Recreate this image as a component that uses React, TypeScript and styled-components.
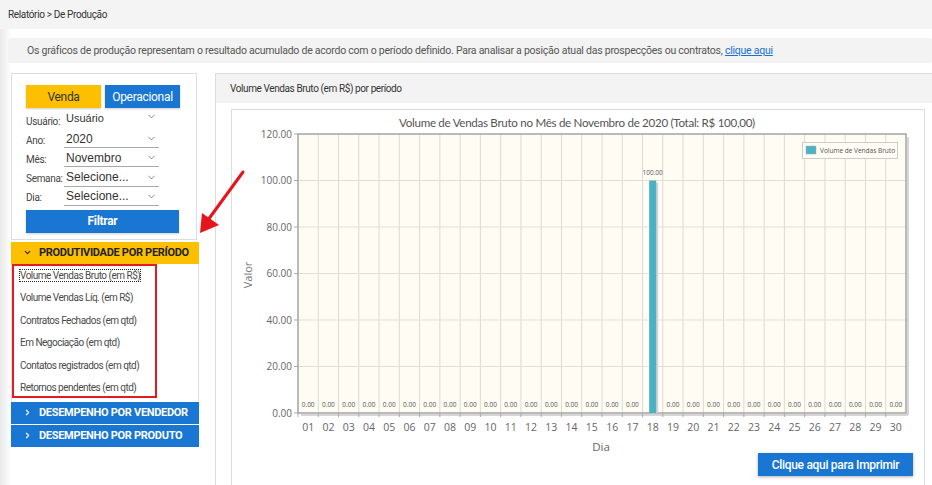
import React from 'react';
import styled, { createGlobalStyle } from 'styled-components';
import { ChevronDown, ChevronRight } from 'lucide-react';

const GlobalStyle = createGlobalStyle`
  html, body {
    margin: 0;
    padding: 0;
  }
  body {
    font-family: Roboto, 'Liberation Sans', Arial, sans-serif;
    color: #333;
    background: linear-gradient(to right, #e9e9e9 0, #ffffff 11px);
    overflow: hidden;
  }
  * {
    box-sizing: border-box;
  }
`;

const Page = styled.div`
  position: relative;
  width: 932px;
  height: 485px;
`;

const TopBar = styled.div`
  height: 29px;
  padding-left: 8px;
  background: #f4f4f4;
  font-size: 10px;
  letter-spacing: -0.35px;
  line-height: 29px;
  color: #333;
`;

const InfoBar = styled.div`
  margin: 9px 0 0 8px;
  height: 25px;
  padding-left: 19px;
  background: #f3f3f3;
  border-radius: 3px;
  font-size: 10.5px;
  letter-spacing: -0.24px;
  line-height: 25px;
  color: #555;

  a {
    color: #1a6fd0;
    text-decoration: underline;
  }
`;

const Main = styled.div`
  display: flex;
  align-items: flex-start;
  margin-top: 10px;
  padding-left: 11px;
`;

const Sidebar = styled.aside`
  width: 188px;
  flex-shrink: 0;
`;

const FilterBox = styled.div`
  width: 186px;
  border: 1px solid #ddd;
  padding: 11px 0 6px 14px;
`;

const ButtonRow = styled.div`
  display: flex;
  gap: 4px;
`;

const TabButton = styled.button<{ $tone: 'yellow' | 'blue' }>`
  width: 75px;
  height: 23px;
  border: none;
  padding: 0;
  font-family: Roboto, sans-serif;
  font-size: 12px;
  letter-spacing: -0.3px;
  background: ${p => (p.$tone === 'yellow' ? '#fdc000' : '#1976d2')};
  color: ${p => (p.$tone === 'yellow' ? '#333' : '#fff')};
  box-shadow: 0 1px 2px rgba(0, 0, 0, 0.2);
`;

const Form = styled.div`
  display: flex;
  flex-direction: column;
  margin-top: 2px;
`;

const FormRow = styled.div`
  display: flex;
  align-items: center;
  height: 19.2px;
`;

const FieldLabel = styled.span`
  width: 38px;
  font-size: 10px;
  letter-spacing: -0.3px;
  color: #444;
  margin-top: 3px;
`;

const FakeSelect = styled.div<{ $plain?: boolean }>`
  position: relative;
  width: 95px;
  height: 19px;
  display: flex;
  align-items: center;
  padding-left: 2px;
  border-bottom: ${p => (p.$plain ? 'none' : '1px solid #aaa')};
  font-family: 'Liberation Sans', Arial, sans-serif;
  font-size: ${p => (p.$plain ? '11px' : '12px')};
  color: #333;

  span {
    margin-top: ${p => (p.$plain ? '-4px' : '1px')};
  }

  svg {
    position: absolute;
    right: 2px;
    top: ${p => (p.$plain ? '1px' : '4px')};
  }
`;

const FilterButton = styled.button`
  margin-top: 4px;
  width: 153px;
  height: 23px;
  border: none;
  background: #1976d2;
  color: #fff;
  font-family: Roboto, sans-serif;
  font-weight: 700;
  font-size: 12px;
  letter-spacing: -0.3px;
  box-shadow: 0 1px 2px rgba(0, 0, 0, 0.2);
`;

const Accordion = styled.div`
  margin-top: 2px;
`;

const SectionHeader = styled.div<{ $active?: boolean }>`
  display: flex;
  align-items: center;
  height: 22px;
  margin-top: ${p => (p.$active ? '0' : '1px')};
  padding-left: 12px;
  background: ${p => (p.$active ? '#fdc000' : '#1976d2')};
  color: ${p => (p.$active ? '#222' : '#fff')};
  font-weight: 700;
  font-size: 11px;
  letter-spacing: -0.3px;

  svg {
    margin-right: 7px;
  }
`;

const SectionBody = styled.div`
  border-left: 1px solid #ddd;
  border-right: 1px solid #ddd;
  padding-bottom: 3px;
`;

const HighlightBox = styled.ul`
  list-style: none;
  margin: 0;
  width: 145px;
  padding: 2px 0 0 6px;
  border: 2px solid #e31b23;
  display: flex;
  flex-direction: column;
  gap: 6.4px;
`;

const MenuItem = styled.li<{ $focused?: boolean }>`
  height: 16px;
  line-height: 16px;
  font-size: 10px;
  letter-spacing: -0.5px;
  color: #4a4a4a;
  white-space: nowrap;

  span {
    outline: ${p => (p.$focused ? '1px dotted #222' : 'none')};
  }
`;

const ChartPanel = styled.section`
  flex: 1;
  margin-left: 16px;
  border: 1px solid #ddd;
  border-right: none;
  height: 413px;
`;

const PanelHeader = styled.div`
  height: 29px;
  padding-left: 14px;
  background: #f3f3f3;
  font-size: 10px;
  letter-spacing: -0.4px;
  line-height: 29px;
  color: #333;
`;

const ChartBox = styled.div`
  margin: 6px 7px 0 15px;
  border: 1px solid #ddd;
  height: 380px;
  display: flex;
  flex-direction: column;
`;

const PrintRow = styled.div`
  display: flex;
  justify-content: flex-end;
  padding-right: 11px;
`;

const PrintButton = styled.button`
  width: 155px;
  height: 23px;
  border: none;
  background: #1976d2;
  color: #fff;
  font-family: Roboto, sans-serif;
  font-size: 12px;
  font-weight: 500;
  letter-spacing: -0.3px;
  box-shadow: 0 1px 3px rgba(0, 0, 0, 0.3);
`;

const ArrowOverlay = styled.svg`
  position: absolute;
  left: 190px;
  top: 160px;
  overflow: visible;
`;

const CHART_FONT = "'Open Sans', 'DejaVu Sans', sans-serif";
const TITLE_FONT = "Lato, 'Open Sans', sans-serif";

const days = Array.from({ length: 30 }, (_, i) => ({
  day: String(i + 1).padStart(2, '0'),
  value: i === 17 ? 100 : 0,
}));

const SalesChart: React.FC = () => {
  const x0 = 66;
  const x1 = 674;
  const y0 = 24;
  const y1 = 303;
  const cw = (x1 - x0) / days.length;
  const yOf = (v: number) => y1 - (v / 120) * (y1 - y0);
  const ticks = [0, 20, 40, 60, 80, 100, 120];

  return (
    <svg width={691} height={343} style={{ display: 'block' }}>
      <text
        x={345}
        y={17}
        textAnchor="middle"
        fontFamily={TITLE_FONT}
        fontSize={11.6}
        letterSpacing={-0.3}
        fill="#555"
      >
        Volume de Vendas Bruto no Mês de Novembro de 2020 (Total: R$ 100,00)
      </text>

      <rect x={x0} y={y0} width={x1 - x0} height={y1 - y0} fill="#fffcf4" />

      {days.slice(1).map((_, i) => (
        <line
          key={'v' + i}
          x1={x0 + (i + 1) * cw}
          x2={x0 + (i + 1) * cw}
          y1={y0}
          y2={y1}
          stroke="#dcdad4"
          strokeWidth={1}
        />
      ))}
      {ticks.slice(1, -1).map(v => (
        <line key={'h' + v} x1={x0} x2={x1} y1={yOf(v)} y2={yOf(v)} stroke="#e2dfd6" strokeWidth={1} />
      ))}

      {/* plot shadow */}
      <line x1={x1 + 2} x2={x1 + 2} y1={y0 + 3} y2={y1 + 2} stroke="#d6d6d6" strokeWidth={2} />
      <line x1={x0 + 3} x2={x1 + 2} y1={y1 + 2} y2={y1 + 2} stroke="#d6d6d6" strokeWidth={2} />
      <rect x={x0} y={y0} width={x1 - x0} height={y1 - y0} fill="none" stroke="#a4a4a4" strokeWidth={1.5} />

      {ticks.map(v => (
        <g key={'t' + v}>
          <line x1={x0 - 4} x2={x0} y1={yOf(v)} y2={yOf(v)} stroke="#aaa" strokeWidth={1} />
          <text
            x={x0 - 6}
            y={yOf(v) + 3.5}
            textAnchor="end"
            fontFamily={CHART_FONT}
            fontSize={10}
            fill="#666"
          >
            {v.toFixed(2)}
          </text>
        </g>
      ))}

      <text
        x={20}
        y={165}
        transform="rotate(-90 20 165)"
        textAnchor="middle"
        fontFamily={CHART_FONT}
        fontSize={11}
        fill="#777"
      >
        Valor
      </text>

      {days.map((d, i) => {
        const cx = x0 + (i + 0.5) * cw;
        return (
          <g key={d.day}>
            <line x1={x0 + i * cw} x2={x0 + i * cw} y1={y1} y2={y1 + 4} stroke="#aaa" strokeWidth={1} />
            {d.value > 0 ? (
              <>
                <rect x={cx - 0.5} y={yOf(d.value) + 2} width={6} height={y1 - yOf(d.value) - 2} fill="#d2d2d2" />
                <rect x={cx - 3.5} y={yOf(d.value)} width={7} height={y1 - yOf(d.value)} fill="#4bb2c6" />
                <text x={cx} y={yOf(d.value) - 6} textAnchor="middle" fontFamily={CHART_FONT} fontSize={6.5} fill="#555">
                  {d.value.toFixed(2)}
                </text>
              </>
            ) : (
              <text x={cx} y={y1 - 6} textAnchor="middle" fontFamily={CHART_FONT} fontSize={6.5} fill="#555">
                0.00
              </text>
            )}
            <text x={cx} y={y1 + 18} textAnchor="middle" fontFamily={CHART_FONT} fontSize={10.5} fill="#666">
              {d.day}
            </text>
          </g>
        );
      })}

      <text x={369} y={341} textAnchor="middle" fontFamily={CHART_FONT} fontSize={11.5} fill="#666">
        Dia
      </text>

      <rect x={570.5} y={32.5} width={95} height={16} fill="#fffcf4" stroke="#ccc" strokeWidth={1} />
      <rect x={574} y={36} width={10} height={8} fill="#4bb2c6" stroke="#aaa" strokeWidth={0.5} />
      <text x={588} y={43} fontFamily={CHART_FONT} fontSize={6.5} fill="#555">
        Volume de Vendas Bruto
      </text>
    </svg>
  );
};

const filters = [
  { label: 'Usuário:', value: 'Usuário', plain: true },
  { label: 'Ano:', value: '2020' },
  { label: 'Mês:', value: 'Novembro' },
  { label: 'Semana:', value: 'Selecione...' },
  { label: 'Dia:', value: 'Selecione...' },
];

const reports = [
  'Volume Vendas Bruto (em R$)',
  'Volume Vendas Líq. (em R$)',
  'Contratos Fechados (em qtd)',
  'Em Negociação (em qtd)',
  'Contatos registrados (em qtd)',
  'Retornos pendentes (em qtd)',
];

const App: React.FC = () => {
  return (
    <Page>
      <GlobalStyle />
      <TopBar>Relatório &gt; De Produção</TopBar>
      <InfoBar>
        Os gráficos de produção representam o resultado acumulado de acordo com o período definido. Para analisar a
        posição atual das prospecções ou contratos, <a href="#">clique aqui</a>
      </InfoBar>

      <Main>
        <Sidebar>
          <FilterBox>
            <ButtonRow>
              <TabButton $tone="yellow">Venda</TabButton>
              <TabButton $tone="blue">Operacional</TabButton>
            </ButtonRow>
            <Form>
              {filters.map(f => (
                <FormRow key={f.label}>
                  <FieldLabel>{f.label}</FieldLabel>
                  <FakeSelect $plain={f.plain}>
                    <span>{f.value}</span>
                    <ChevronDown size={11} strokeWidth={1.5} color="#555" />
                  </FakeSelect>
                </FormRow>
              ))}
            </Form>
            <FilterButton>Filtrar</FilterButton>
          </FilterBox>

          <Accordion>
            <SectionHeader $active>
              <ChevronDown size={9} strokeWidth={3} />
              PRODUTIVIDADE POR PERÍODO
            </SectionHeader>
            <SectionBody>
              <HighlightBox>
                {reports.map((r, i) => (
                  <MenuItem key={r} $focused={i === 0}>
                    <span>{r}</span>
                  </MenuItem>
                ))}
              </HighlightBox>
            </SectionBody>
            <SectionHeader>
              <ChevronRight size={9} strokeWidth={3} />
              DESEMPENHO POR VENDEDOR
            </SectionHeader>
            <SectionHeader>
              <ChevronRight size={9} strokeWidth={3} />
              DESEMPENHO POR PRODUTO
            </SectionHeader>
          </Accordion>
        </Sidebar>

        <ChartPanel>
          <PanelHeader>Volume Vendas Bruto (em R$) por período</PanelHeader>
          <ChartBox>
            <SalesChart />
            <PrintRow>
              <PrintButton>Clique aqui para Imprimir</PrintButton>
            </PrintRow>
          </ChartBox>
        </ChartPanel>
      </Main>

      <ArrowOverlay width={60} height={80}>
        <line x1={53} y1={12} x2={18} y2={60} stroke="#e8141c" strokeWidth={3} strokeLinecap="round" />
        <polygon points="10,73 12,53 29,65" fill="#e8141c" />
      </ArrowOverlay>
    </Page>
  );
};

export default App;
